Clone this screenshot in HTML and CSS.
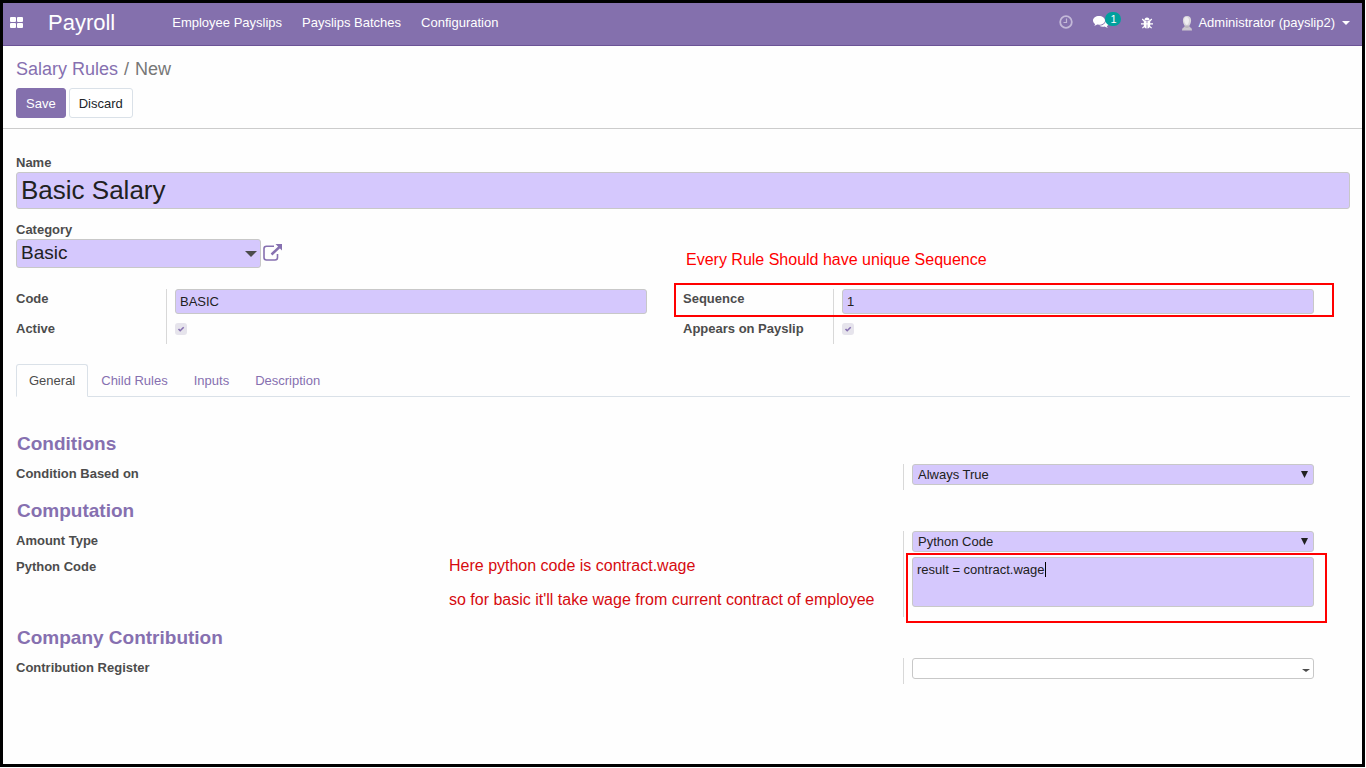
FILE: index.html
```html
<!DOCTYPE html>
<html lang="en">
<head>
<meta charset="utf-8">
<title>Salary Rules / New - Payroll</title>
<link rel="stylesheet" href="styles.css">
</head>
<body>
<div class="app">
  <header class="navbar">
    <button class="apps" type="button" aria-label="Applications">
      <svg width="13" height="11" viewBox="0 0 13 11" fill="#fff"><rect width="6" height="5" rx="1"/><rect x="7" width="6" height="5" rx="1"/><rect y="6" width="6" height="5" rx="1"/><rect x="7" y="6" width="6" height="5" rx="1"/></svg>
    </button>
    <a class="brand" href="#">Payroll</a>
    <nav class="menu">
      <a href="#">Employee Payslips</a>
      <a href="#">Payslips Batches</a>
      <a href="#">Configuration</a>
    </nav>
    <div class="systray">
      <button type="button" class="clock" aria-label="Activities">
        <svg width="14" height="14" viewBox="0 0 14 14" fill="none" stroke="#c3b8d8"><circle cx="7" cy="7" r="5.800" stroke-width="1.800"/><path d="M7.500 3.500v4H4.500" stroke-width="1.200"/></svg>
      </button>
      <button type="button" class="chat" aria-label="Conversations">
        <svg width="16" height="13" viewBox="0 0 16 13" fill="#fff"><path d="M6 0C2.700 0 0 1.900 0 4.500c0 1.500.9 2.800 2.200 3.600-.2.700-.6 1.200-1 1.600 1.200-.1 2.200-.5 3-1.100C9 9.200 12 7.300 12 4.500 12 1.900 9.300 0 6 0z"/><path d="M13 3.500c.3 3.200-2.500 6-6.600 6.300 1.400.9 3.300 1.200 5.100.8 1 .7 2.200 1.200 3.500 1.300-.6-.5-1-1.100-1.200-1.700C15.200 9.400 16 8.300 16 7c0-1.500-1.200-2.800-3-3.500z"/></svg>
        <span class="badge">1</span>
      </button>
      <button type="button" class="bug" aria-label="Debug">
        <svg width="12" height="12" viewBox="0 0 12 12"><path d="M3.500 3a2.500 2.500 0 0 1 5 0z" fill="#fff"/><path d="M2.800 3.600h2.800v8C3.800 11.400 2.800 10 2.800 8zM9.200 3.600H6.400v8c1.800-.2 2.800-1.600 2.800-3.600z" fill="#fff"/><path d="M1.200 2l2.300 2.200M10.800 2L8.500 4.200M0 6.800h12M1.400 11.200l2.400-2.400M10.600 11.200L8.200 8.800" stroke="#fff" stroke-width="1.200" fill="none"/></svg>
      </button>
      <button type="button" class="user">
        <svg width="12" height="15" viewBox="0 0 12 15"><path d="M1 14.500c0-2 1-3.200 2.700-3.500h4.600C10 11.300 11 12.500 11 14.500z" fill="#cbc6cf"/><path d="M6 0c2.800 0 4.200 1.900 4.100 4.500C10 7 9 8.700 8.400 9.500v2L6 13l-2.400-1.500v-2C3 8.700 2 7 1.900 4.500 1.800 1.900 3.200 0 6 0z" fill="#d9d6db"/><path d="M5 1c2 0 3 1.300 3 3.500S7 8.500 5.800 9C4.500 8 3.200 6.700 3.200 4.300 3.200 2 4 1 5 1z" fill="#efedf0"/><path d="M4 9.500h4v2l-2 1-2-1z" fill="#bcb7bf"/></svg>
        <span>Administrator (payslip2)</span>
        <svg width="8" height="4" viewBox="0 0 8 4"><path d="M0 0h8L4 4z" fill="#fff"/></svg>
      </button>
    </div>
  </header>

  <section class="control">
    <div class="crumbs"><a href="#">Salary Rules</a><span>/</span><span>New</span></div>
    <div class="actions">
      <button type="button" class="btn primary">Save</button>
      <button type="button" class="btn">Discard</button>
    </div>
  </section>

  <main class="sheet">
    <label class="title-label" for="name">Name</label>
    <input class="field name" id="name" type="text" value="Basic Salary">
    <label class="title-label" for="category">Category</label>
    <div class="category-row">
      <select class="field category" id="category"><option>Basic</option></select>
      <a class="external" href="#" aria-label="Open category">
        <svg width="20" height="17" viewBox="0 0 20 17" fill="none" stroke="#8670b0"><path d="M11 2.200H3.500C1.800 2.200 1 3 1 4.500v9C1 15 1.800 16 3.500 16h8.500c1.700 0 2.500-1 2.500-2.500V10" stroke-width="1.600"/><path d="M8.500 10.500L16.500 3" stroke-width="2.400"/><path d="M12.500 0H19v6.500z" fill="#8670b0" stroke="none"/></svg>
      </a>
    </div>

    <div class="groups">
      <div class="group">
        <div class="row"><label for="code">Code</label><div class="value"><input class="field" id="code" type="text" value="BASIC"></div></div>
        <div class="row"><label for="active">Active</label><div class="value"><input class="check" id="active" type="checkbox" checked></div></div>
      </div>
      <div class="group">
        <p class="note note-sequence">Every Rule Should have unique Sequence</p>
        <div class="row"><label for="sequence">Sequence</label><div class="value"><input class="field" id="sequence" type="text" value="1"></div></div>
        <div class="row"><label for="appears">Appears on Payslip</label><div class="value"><input class="check" id="appears" type="checkbox" checked></div></div>
        <div class="mark mark-sequence"></div>
      </div>
    </div>

    <nav class="tabs">
      <a class="current" href="#">General</a>
      <a href="#">Child Rules</a>
      <a href="#">Inputs</a>
      <a href="#">Description</a>
    </nav>

    <div class="page">
      <h2>Conditions</h2>
      <div class="line"><label for="condition">Condition Based on</label><div class="value"><select class="field small" id="condition"><option>Always True</option></select></div></div>
      <h2>Computation</h2>
      <div class="line"><label for="amount">Amount Type</label><div class="value"><select class="field small" id="amount"><option>Python Code</option></select></div></div>
      <div class="line code">
        <label for="python">Python Code</label>
        <div class="value"><textarea class="field" id="python" spellcheck="false">result = contract.wage</textarea><span class="caret"></span><div class="mark mark-code"></div></div>
        <div class="note note-code"><p>Here python code is contract.wage</p><p>so for basic it'll take wage from current contract of employee</p></div>
      </div>
      <h2>Company Contribution</h2>
      <div class="line"><label for="register">Contribution Register</label><div class="value"><select class="field small plain" id="register"><option></option></select></div></div>
    </div>
  </main>
</div>
</body>
</html>
```
FILE: styles.css
```css
* { box-sizing: border-box; }
body {
  margin: 0;
  background: #fff;
  color: #4c4c4c;
  font: 13px/20px "Liberation Sans", Arial, sans-serif;
}
a { color: #8670b0; text-decoration: none; }
button, input, select, textarea { font: inherit; color: inherit; }
p { margin: 0; }
svg { display: block; }

.app {
  min-height: calc(100vh - 1px);
  margin-right: 1px;
  border: 3px solid #000;
  background: #fefefe;
}

.navbar {
  display: flex;
  align-items: center;
  height: 43px;
  padding: 0 12px 2px 7px;
  background: #8470ad;
  border-bottom: 1px solid #6b5396;
}
.navbar a, .navbar button { color: #fff; }
.navbar button { padding: 0; border: 0; background: none; }
.navbar .apps { padding-bottom: 2px; }
.brand { margin-left: 25px; font-size: 22px; }
.menu { display: flex; gap: 20px; margin-left: 57px; }
.systray { display: flex; align-items: center; margin-left: auto; }
.navbar .clock, .navbar .chat { padding-bottom: 2px; }
.chat { position: relative; margin-left: 20px; }
.bug { margin-left: 32px; }
.badge {
  position: absolute;
  left: 12px;
  top: -4px;
  width: 16px;
  height: 14px;
  border-radius: 7px;
  background: #00a09d;
  font-size: 11px;
  line-height: 14px;
}
.user { display: flex; align-items: center; gap: 5px; margin-left: 28px; }
.user svg:last-child { margin-left: 2px; }

.control { padding: 13px 13px 10px; border-bottom: 1px solid #ccc; }
.crumbs { display: flex; gap: 6px; font-size: 18px; color: #777; }
.actions { display: flex; gap: 3px; margin-top: 9px; }
.btn {
  height: 30px;
  padding: 2px 9px 0;
  border: 1px solid #dae1e8;
  border-radius: 3px;
  background: #fff;
  color: #212529;
}
.btn.primary { background: #8470ad; border-color: #8470ad; color: #fff; }

.sheet { padding: 24px 12px 0 13px; }
label { display: block; font-weight: bold; }
.title-label { line-height: 19px; }
.field {
  display: block;
  width: 100%;
  height: 25px;
  padding: 0 4px;
  border: 1px solid #c8c8c8;
  border-radius: 3px;
  background: #d5c8fd;
  color: #212121;
  outline: 0;
}
.name { height: 37px; margin-bottom: 11px; font-size: 26px; }
.category-row { display: flex; gap: 2px; }
.category {
  width: 245px;
  height: 29px;
  padding-bottom: 1px;
  appearance: none;
  font-size: 19px;
  background: #d5c8fd url("data:image/svg+xml,%3Csvg xmlns='http://www.w3.org/2000/svg' width='12' height='6'%3E%3Cpath d='M0 0h12L6 6z' fill='%234c4c4c'/%3E%3C/svg%3E") no-repeat right 3px center;
}
.external { padding-top: 5px; }

.groups { display: grid; grid-template-columns: 1fr 1fr; margin-top: 21px; }
.group { position: relative; padding-right: 36px; }
.row { display: grid; grid-template-columns: 150px 1fr; }
.row .value { min-height: 30px; }
.row:nth-of-type(2) .value { min-height: 25px; }
.value { border-left: 1px solid #d8d8d8; padding-left: 8px; }
.check {
  appearance: none;
  display: block;
  width: 12px;
  height: 12px;
  margin: 4px 0 0;
  border-radius: 3px;
  background: #e6e4ec url("data:image/svg+xml,%3Csvg xmlns='http://www.w3.org/2000/svg' width='12' height='12'%3E%3Cpath d='M3.500 6l1.700 1.700L8.700 4.300' stroke='%238670b0' stroke-width='1.600' fill='none'/%3E%3C/svg%3E");
}

.tabs { display: flex; margin-top: 20px; border-bottom: 1px solid #dae1e8; }
.tabs a { padding: 6px 12px 5px; border: 1px solid transparent; margin-bottom: -1px; }
.tabs .current {
  color: #4c4c4c;
  background: #fefefe;
  border-color: #dae1e8 #dae1e8 #fefefe;
  border-radius: 3px 3px 0 0;
}

.page { padding: 37px 36px 0 0; }
h2 { margin: 0; padding: 0 1px 10px; font-size: 19px; line-height: 20px; color: #8670b0; }
.line { position: relative; display: grid; grid-template-columns: 887fr 411fr; }
.line .value { min-height: 26px; }
.line + h2 { padding-top: 11px; }
.small {
  height: 21px;
  padding: 0 5px;
  appearance: none;
  background: #d5c8fd url("data:image/svg+xml,%3Csvg xmlns='http://www.w3.org/2000/svg' width='7' height='7'%3E%3Cpath d='M0 0h7L3.500 7z' fill='%23212121'/%3E%3C/svg%3E") no-repeat right 5px top 6px;
}
.plain {
  background: #fff url("data:image/svg+xml,%3Csvg xmlns='http://www.w3.org/2000/svg' width='8' height='3'%3E%3Cpath d='M0 0h8L4 3z' fill='%234c4c4c'/%3E%3C/svg%3E") no-repeat right 3px top 10px;
}
.code .value { position: relative; min-height: 60px; }
textarea.field { height: 50px; padding: 2px 4px; resize: none; overflow: hidden; }

.caret { position: absolute; left: 141px; top: 5px; width: 1px; height: 15px; background: #000; }
.note { position: absolute; font-size: 16px; line-height: 20px; white-space: nowrap; color: #f00; }
.note-sequence { left: 3px; top: -39px; }
.note-code { left: 433px; top: -1px; color: #d60a0f; }
.note-code p + p { margin-top: 14px; }
.mark { position: absolute; border: 2px solid #f00; pointer-events: none; }
.mark-sequence { left: -9px; right: 16px; top: -6px; height: 34px; }
.mark-code { left: 2px; right: -13px; top: -4px; height: 70px; }
```
